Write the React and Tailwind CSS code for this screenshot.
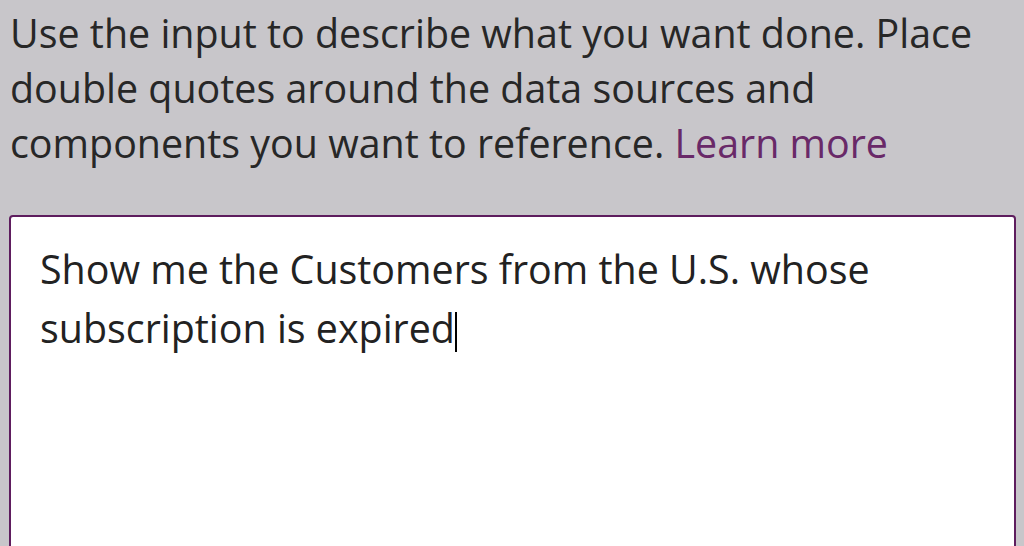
export default function App() {
  return (
    <div className="min-h-[546px] h-[546px] overflow-hidden bg-[#c8c6ca] font-['Open_Sans',sans-serif]">
      <div className="pt-[6px] pl-[10px] pr-[8px]">
        <p className="text-[39.4px] leading-[55px] text-[#272727] whitespace-nowrap">
          Use the input to describe what you want done. Place
          <br />
          double quotes around the data sources and
          <br />
          components you want to reference.{" "}
          <a href="#" className="text-[#692968]">Learn more</a>
        </p>
      </div>

      <div className="mt-[44px] ml-[9px] mr-[8px] h-[400px] rounded-[4px] border-2 border-[#5e1d5e] bg-white pt-[23px] pl-[29px]">
        <p className="text-[39.4px] leading-[59px] text-[#222222] whitespace-nowrap">
          Show me the Customers from the U.S. whose
          <br />
          subscription is expired
          <span className="inline-block w-[2px] h-[40px] bg-black align-[-9px]" />
        </p>
      </div>
    </div>
  );
}
